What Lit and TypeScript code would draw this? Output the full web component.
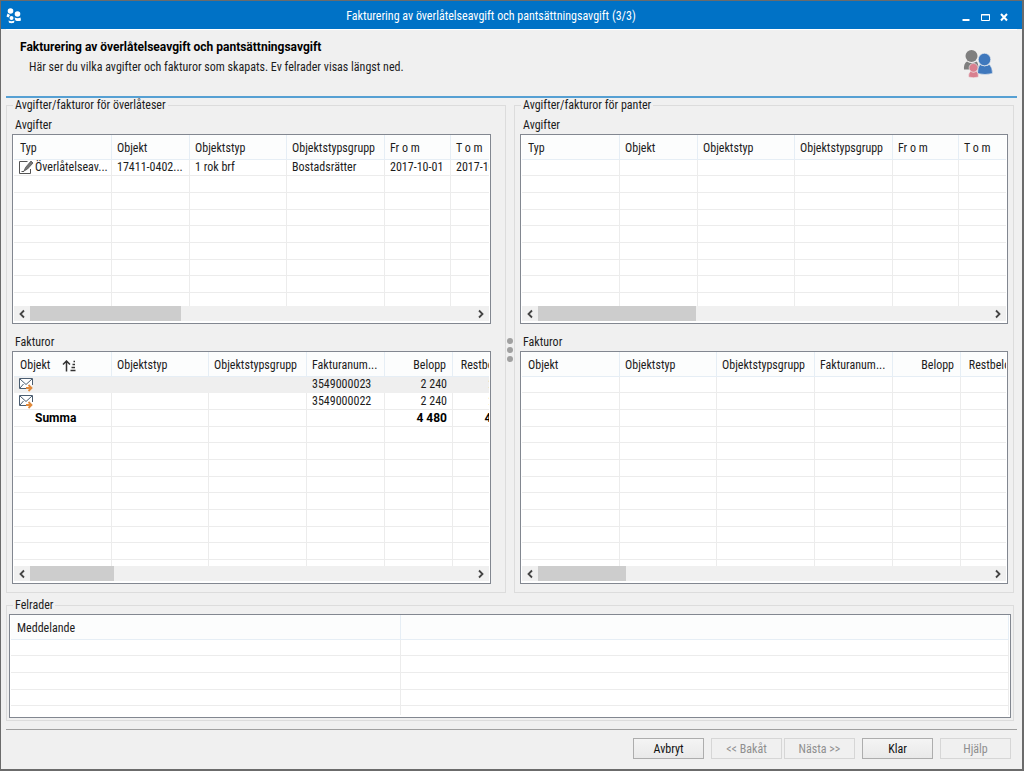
import { LitElement, html, css, nothing } from "lit";
import { customElement, property } from "lit/decorators.js";
import { classMap } from "lit/directives/class-map.js";
import { styleMap } from "lit/directives/style-map.js";

type Icon = "edit" | "mail";
interface Column {
  label: string;
  width: number;
  numeric?: boolean;
  sorted?: boolean;
}
interface Row {
  cells: string[];
  icon?: Icon;
  selected?: boolean;
  total?: boolean;
}

const FEE_COLUMNS: Column[] = [
  { label: "Typ", width: 98 },
  { label: "Objekt", width: 78 },
  { label: "Objektstyp", width: 97 },
  { label: "Objektstypsgrupp", width: 98 },
  { label: "Fr o m", width: 66 },
  { label: "T o m", width: 66 },
];
const INVOICE_COLUMNS: Column[] = [
  { label: "Objekt", width: 98 },
  { label: "Objektstyp", width: 97 },
  { label: "Objektstypsgrupp", width: 98 },
  { label: "Fakturanum...", width: 78 },
  { label: "Belopp", width: 68, numeric: true },
  { label: "Restbelopp", width: 68, numeric: true },
];
const SORTED_INVOICE_COLUMNS = INVOICE_COLUMNS.map((c, i) => (i === 0 ? { ...c, sorted: true } : c));

const FEE_ROWS: Row[] = [
  { icon: "edit", cells: ["Överlåtelseav...", "17411-0402...", "1 rok brf", "Bostadsrätter", "2017-10-01", "2017-10-31"] },
];
const INVOICE_ROWS: Row[] = [
  { icon: "mail", selected: true, cells: ["", "", "", "3549000023", "2 240", "2 240"] },
  { icon: "mail", cells: ["", "", "", "3549000022", "2 240", "2 240"] },
  { total: true, cells: ["Summa", "", "", "", "4 480", "4 480"] },
];

const editIcon = html`<svg class="icon" width="16" height="15" viewBox="0 0 16 15" fill="none" stroke="#555" aria-hidden="true">
  <path d="M9.500 1.500H1.500V13.500H12.500V9"></path>
  <path d="M13 1L7.500 7.500L6 11L9.500 9L15 3Z" fill="#777" stroke-width="0.800"></path>
  <path d="M3.500 11.500H6"></path>
</svg>`;

const mailIcon = html`<svg class="icon" width="16" height="15" viewBox="0 0 16 15" fill="none" aria-hidden="true">
  <path d="M8 11.500H1.500V1.500H14.500V8" stroke="#4a5d70" fill="#fff"></path>
  <path d="M2 2L8 7.500L14 2M2 11L5.500 7" stroke="#4a5d70"></path>
  <path d="M8 11H13M10.500 8L13.500 11L10.500 14" stroke="#e08a3c" stroke-width="1.800"></path>
</svg>`;

const sortIcon = html`<svg class="sort" width="14" height="12" viewBox="0 0 14 12" fill="none" stroke="#333" aria-label="Stigande">
  <path d="M4.500 11.500V1M1 4.500L4.500 1L8 4.500" stroke-width="1.500"></path>
  <path d="M11.500 1.500H13M10.500 4.500H13M9.500 7.500H13M8.500 10.500H13.500" stroke-width="1.300"></path>
</svg>`;

const FONT = css`12px/16px "Roboto Condensed", "Liberation Sans", sans-serif`;

@customElement("data-grid")
class DataGrid extends LitElement {
  @property({ attribute: false }) columns: Column[] = [];
  @property({ attribute: false }) rows: Row[] = [];
  @property({ type: Number }) thumb = 0;
  @property({ type: Number }) fill = 14;
  @property() label = "";

  static styles = css`
    :host {
      display: flex;
      flex-direction: column;
      min-height: 0;
      box-sizing: border-box;
      border: 1px solid #828790;
      background: #fff;
      padding: 0 1px 2px;
      font: ${FONT};
      color: #1c1c1c;
    }
    .view {
      flex: 1 1 0;
      min-height: 0;
      overflow: hidden;
    }
    table {
      table-layout: fixed;
      width: 100%;
      min-width: max-content;
      border-collapse: separate;
      border-spacing: 0;
    }
    th,
    td {
      box-sizing: border-box;
      padding: 0 5px;
      border-right: 1px solid #ececec;
      border-bottom: 1px solid #ececec;
      font-weight: normal;
      text-align: left;
      white-space: nowrap;
      overflow: hidden;
      line-height: 16px;
      height: 17px;
    }
    tr:nth-child(3n + 1) td {
      height: 16px;
      line-height: 15px;
    }
    th {
      height: 25px;
      padding: 1px 6px 0 5px;
      background: #fcfdfd;
      border-color: #e6eef5;
    }
    th:first-child {
      padding-left: 6px;
    }
    td:first-child {
      padding: 0 0 0 4px;
    }
    .numeric {
      text-align: right;
    }
    .selected td {
      background: #efefef;
      border-color: #efefef;
    }
    .total td {
      font-family: Roboto, sans-serif;
      font-weight: bold;
      color: #000;
    }
    .total td:first-child {
      padding-left: 21px;
    }
    .cell {
      display: flex;
      align-items: center;
      height: 15px;
      gap: 1px;
    }
    .icon {
      flex: none;
    }
    .sort {
      margin-left: 12px;
      vertical-align: middle;
    }
    .bar {
      display: flex;
      height: 15px;
      background: #f0f0f0;
    }
    .bar button {
      width: 16px;
      padding: 0;
      border: 0;
      background: none;
      display: grid;
      place-items: center;
    }
    .track {
      flex: 1;
      display: flex;
    }
    .thumb {
      background: #cdcdcd;
    }
  `;

  private cell(row: Row, text: string, i: number) {
    const numeric = this.columns[i]?.numeric;
    if (i === 0 && row.icon) {
      return html`<td><div class="cell">${row.icon === "edit" ? editIcon : mailIcon}<span>${text}</span></div></td>`;
    }
    return html`<td class=${classMap({ numeric: !!numeric })}>${text}</td>`;
  }

  render() {
    const blank: Row = { cells: this.columns.map(() => "") };
    const all = [...this.rows, ...Array.from({ length: this.fill }, () => blank)];
    return html`
      <div class="view">
        <table aria-label=${this.label}>
          <colgroup>
            ${this.columns.map((c) => html`<col style=${styleMap({ width: c.width ? `${c.width}px` : "auto" })} />`)}
          </colgroup>
          <thead>
            <tr>
              ${this.columns.map(
                (c) => html`<th scope="col" class=${classMap({ numeric: !!c.numeric })}>${c.label}${c.sorted ? sortIcon : nothing}</th>`
              )}
            </tr>
          </thead>
          <tbody>
            ${all.map(
              (r) => html`<tr class=${classMap({ selected: !!r.selected, total: !!r.total })}>
                ${r.cells.map((t, i) => this.cell(r, t, i))}
              </tr>`
            )}
          </tbody>
        </table>
      </div>
      ${this.thumb
        ? html`<div class="bar">
            <button aria-label="Rulla åt vänster">
              <svg width="8" height="10" viewBox="0 0 8 10" fill="none" stroke="#444" stroke-width="1.800"><path d="M6 1.500L2.500 5L6 8.500"></path></svg>
            </button>
            <div class="track"><div class="thumb" style=${styleMap({ width: `${this.thumb}%` })}></div></div>
            <button aria-label="Rulla åt höger">
              <svg width="8" height="10" viewBox="0 0 8 10" fill="none" stroke="#444" stroke-width="1.800"><path d="M2 1.500L5.500 5L2 8.500"></path></svg>
            </button>
          </div>`
        : nothing}
    `;
  }
}

@customElement("app-root")
class AppRoot extends LitElement {
  static styles = css`
    :host {
      display: block;
      background: #6b6b6b;
      font: ${FONT};
      color: #1c1c1c;
    }
    .window {
      display: flex;
      flex-direction: column;
      box-sizing: border-box;
      height: 100vh;
      min-height: 480px;
      border: 1px solid #6b6b6b;
      border-bottom-width: 2px;
      border-right-width: 2px;
      background: #f0f0f0;
    }
    .titlebar {
      display: flex;
      align-items: center;
      height: 28px;
      box-sizing: border-box;
      flex: none;
      padding: 2px 9px 0 5px;
      background: #0072c6;
      color: #fff;
    }
    .titlebar h1 {
      flex: 1;
      margin: 0;
      padding-left: 16px;
      padding-right: 12px;
      font: inherit;
      text-align: center;
    }
    .winbtn {
      display: grid;
      place-items: center;
      width: 19px;
      height: 20px;
      padding: 2px 0 0;
      border: 0;
      background: none;
    }
    .head {
      display: flex;
      justify-content: space-between;
      align-items: flex-start;
      flex: none;
      height: 69px;
      box-sizing: border-box;
      margin: 0 5px;
      padding: 9px 24px 0 14px;
      border-top: 1px solid #fff;
      border-bottom: 2px solid #56a0d3;
    }
    .head h2 {
      margin: 0;
      font: bold 12px/16px Roboto, sans-serif;
      color: #000;
    }
    .head p {
      margin: 3px 0 0 9px;
      line-height: 18px;
    }
    .head svg {
      margin-top: 10px;
    }
    .split {
      display: grid;
      grid-template-columns: minmax(0, 1fr) 8px minmax(0, 1fr);
      flex: 1 1 0;
      min-height: 0;
      margin: 0 8px 0 5px;
    }
    fieldset {
      display: flex;
      flex-direction: column;
      min-width: 0;
      min-height: 0;
      box-sizing: border-box;
      margin: 0;
      border: 1px solid #dcdcdc;
      padding: 4px 5px 8px;
    }
    .left {
      padding-right: 14px;
    }
    legend {
      padding: 0 2px;
      line-height: 15px;
      margin-left: 1px;
    }
    h3 {
      flex: none;
      margin: 0;
      padding: 0 3px;
      height: 17px;
      font: inherit;
    }
    .fees {
      flex: 190 1 0;
      margin-bottom: 10px;
    }
    .invoices {
      flex: 233 1 0;
    }
    .grip {
      display: flex;
      flex-direction: column;
      align-items: center;
      justify-content: center;
      gap: 3px;
      padding-top: 8px;
    }
    .grip i {
      width: 6px;
      height: 6px;
      border-radius: 50%;
      background: #a0a0a0;
    }
    .errors {
      flex: none;
      margin: 5px 8px 0 5px;
      padding: 1px 2px 2px;
    }
    .errors legend {
      margin-left: 4px;
    }
    .errors data-grid {
      height: 104px;
    }
    footer {
      display: flex;
      justify-content: flex-end;
      gap: 7px;
      flex: none;
      height: 40px;
      box-sizing: border-box;
      margin: 8px 5px 0;
      padding: 8px 6px 0 0;
      border-top: 1px solid #a0a0a0;
    }
    footer button {
      width: 71px;
      height: 21px;
      padding: 0;
      border: 1px solid #adadad;
      background: linear-gradient(#f4f4f4, #e9e9e9);
      font: inherit;
      color: #111;
    }
    footer button:disabled {
      border-color: #d6d6d6;
      background: #f0f0f0;
      color: #8f8f8f;
    }
    .pair {
      display: flex;
      gap: 2px;
    }
  `;

  render() {
    return html`
      <main class="window">
        <header class="titlebar">
          <svg width="16" height="18" viewBox="0 0 16 18" fill="#fff" aria-hidden="true">
            <circle cx="4.500" cy="4" r="2.800"></circle>
            <circle cx="11.500" cy="7" r="2.800"></circle>
            <circle cx="5.500" cy="11" r="2"></circle>
            <path d="M1.500 6.500L4 8L2.500 10.500L0.500 9.500ZM8.500 10.500Q12 12 14.500 10.500L15 13.500Q12 14.500 9.500 13.500ZM2.500 13.500Q5.500 14.800 8.500 13.500L8 15.800Q5.500 16.500 3 15.800Z"></path>
          </svg>
          <h1>Fakturering av överlåtelseavgift och pantsättningsavgift (3/3)</h1>
          <button class="winbtn" aria-label="Minimera">
            <svg width="10" height="10" viewBox="0 0 10 10"><path d="M1.500 8H8.500" stroke="#fff" stroke-width="2"></path></svg>
          </button>
          <button class="winbtn" aria-label="Maximera">
            <svg width="10" height="10" viewBox="0 0 10 10" fill="none" stroke="#fff"><path d="M1.500 2.500H9.500V8.500H1.500ZM1 3H10"></path></svg>
          </button>
          <button class="winbtn" aria-label="Stäng">
            <svg width="10" height="10" viewBox="0 0 10 10" stroke="#fff" stroke-width="2"><path d="M2 2L8 8.500M8 2L2 8.500"></path></svg>
          </button>
        </header>
        <header class="head">
          <div>
            <h2>Fakturering av överlåtelseavgift och pantsättningsavgift</h2>
            <p>Här ser du vilka avgifter och fakturor som skapats. Ev felrader visas längst ned.</p>
          </div>
          <svg width="30" height="30" viewBox="0 0 30 30" aria-hidden="true">
            <g fill="#7f7f7f">
              <circle cx="8.500" cy="7" r="6"></circle>
              <path d="M4 12.500Q8.500 15.500 13.500 12.500Q15.500 14 15.500 20.500H1Q0.500 14.500 4 12.500Z"></path>
            </g>
            <g fill="#3f78bd" stroke="#f0f0f0" stroke-width="0.600">
              <path d="M17 15.500Q21.500 18.500 26.500 15.500Q29.500 18.500 29.500 24.500Q22 26.500 14.500 24.500Q14.500 18 17 15.500Z"></path>
              <circle cx="21.500" cy="10.500" r="6.200"></circle>
            </g>
            <g fill="#d9808f" stroke="#f0f0f0" stroke-width="0.600">
              <path d="M7.500 22Q10.500 24 13.500 22Q15.500 24 15.500 28Q10.500 29.500 5.500 28Q5.500 24 7.500 22Z"></path>
              <circle cx="10.500" cy="18.800" r="4.400"></circle>
            </g>
          </svg>
        </header>

        <div class="split">
          <fieldset class="left">
            <legend>Avgifter/fakturor för överlåteser</legend>
            <h3>Avgifter</h3>
            <data-grid class="fees" label="Avgifter" .columns=${FEE_COLUMNS} .rows=${FEE_ROWS} .thumb=${34}></data-grid>
            <h3>Fakturor</h3>
            <data-grid class="invoices" label="Fakturor" .columns=${SORTED_INVOICE_COLUMNS} .rows=${INVOICE_ROWS} .thumb=${19}></data-grid>
          </fieldset>
          <div class="grip" role="separator" aria-orientation="vertical"><i></i><i></i><i></i></div>
          <fieldset>
            <legend>Avgifter/fakturor för panter</legend>
            <h3>Avgifter</h3>
            <data-grid class="fees" label="Avgifter" .columns=${FEE_COLUMNS} .thumb=${35}></data-grid>
            <h3>Fakturor</h3>
            <data-grid class="invoices" label="Fakturor" .columns=${INVOICE_COLUMNS} .thumb=${19.5}></data-grid>
          </fieldset>
        </div>

        <fieldset class="errors">
          <legend>Felrader</legend>
          <data-grid
            label="Felrader"
            .columns=${[{ label: "Meddelande", width: 390 }, { label: "", width: 0 }]}
            .fill=${5}
          ></data-grid>
        </fieldset>

        <footer>
          <button>Avbryt</button>
          <span class="pair"><button disabled>&lt;&lt; Bakåt</button><button disabled>Nästa &gt;&gt;</button></span>
          <button>Klar</button>
          <button disabled>Hjälp</button>
        </footer>
      </main>
    `;
  }
}
